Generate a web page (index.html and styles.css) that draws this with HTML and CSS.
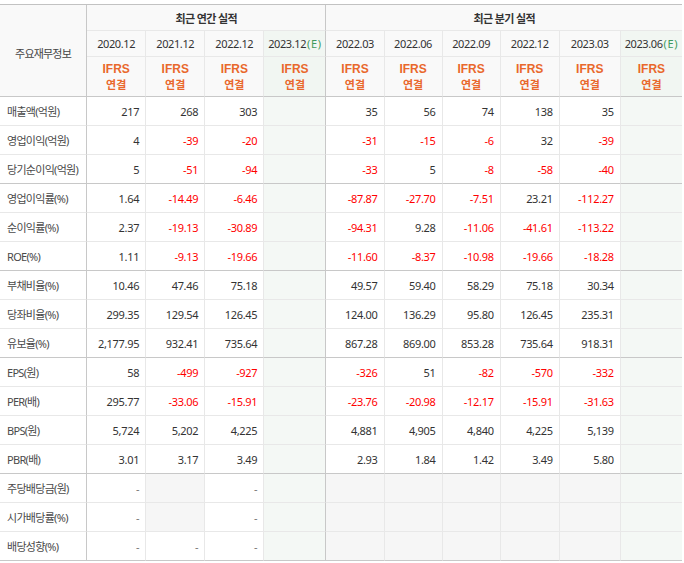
FILE: index.html
```html
<!DOCTYPE html>
<html lang="ko">
<head>
<meta charset="utf-8">
<title>주요재무정보</title>
<link rel="stylesheet" href="styles.css">
</head>
<body>
<table class="fin">
  <colgroup>
    <col class="c-label">
    <col class="c59"><col class="c59"><col class="c59"><col class="c62">
    <col class="c58"><col class="c58"><col class="c58"><col class="c59"><col class="c61"><col class="c62l">
  </colgroup>
  <thead>
    <tr class="h1">
      <th rowspan="3" class="lbl-head sep">주요재무정보</th>
      <th colspan="4" class="grp sep">최근 연간 실적</th>
      <th colspan="6" class="grp last">최근 분기 실적</th>
    </tr>
    <tr class="h2">
      <th>2020.12</th><th>2021.12</th><th>2022.12</th><th class="est sep">2023.12<span class="e">(E)</span></th>
      <th>2022.03</th><th>2022.06</th><th>2022.09</th><th>2022.12</th><th>2023.03</th><th class="est last">2023.06<span class="e">(E)</span></th>
    </tr>
    <tr class="h3">
      <th class="ifrs"><span class="ln l1">IFRS</span><span class="ln l2">연결</span></th>
      <th class="ifrs"><span class="ln l1">IFRS</span><span class="ln l2">연결</span></th>
      <th class="ifrs"><span class="ln l1">IFRS</span><span class="ln l2">연결</span></th>
      <th class="ifrs est sep"><span class="ln l1">IFRS</span><span class="ln l2">연결</span></th>
      <th class="ifrs"><span class="ln l1">IFRS</span><span class="ln l2">연결</span></th>
      <th class="ifrs"><span class="ln l1">IFRS</span><span class="ln l2">연결</span></th>
      <th class="ifrs"><span class="ln l1">IFRS</span><span class="ln l2">연결</span></th>
      <th class="ifrs"><span class="ln l1">IFRS</span><span class="ln l2">연결</span></th>
      <th class="ifrs"><span class="ln l1">IFRS</span><span class="ln l2">연결</span></th>
      <th class="ifrs est last"><span class="ln l1">IFRS</span><span class="ln l2">연결</span></th>
    </tr>
  </thead>
  <tbody>
    <tr>
      <th class="lbl sep">매출액(억원)</th>
      <td>217</td><td>268</td><td>303</td><td class="est sep"></td>
      <td>35</td><td>56</td><td>74</td><td>138</td><td>35</td><td class="est last"></td>
    </tr>
    <tr>
      <th class="lbl sep">영업이익(억원)</th>
      <td>4</td><td class="neg">-39</td><td class="neg">-20</td><td class="est sep"></td>
      <td class="neg">-31</td><td class="neg">-15</td><td class="neg">-6</td><td>32</td><td class="neg">-39</td><td class="est last"></td>
    </tr>
    <tr class="end">
      <th class="lbl sep">당기순이익(억원)</th>
      <td>5</td><td class="neg">-51</td><td class="neg">-94</td><td class="est sep"></td>
      <td class="neg">-33</td><td>5</td><td class="neg">-8</td><td class="neg">-58</td><td class="neg">-40</td><td class="est last"></td>
    </tr>
    <tr>
      <th class="lbl sep">영업이익률(%)</th>
      <td>1.64</td><td class="neg">-14.49</td><td class="neg">-6.46</td><td class="est sep"></td>
      <td class="neg">-87.87</td><td class="neg">-27.70</td><td class="neg">-7.51</td><td>23.21</td><td class="neg">-112.27</td><td class="est last"></td>
    </tr>
    <tr>
      <th class="lbl sep">순이익률(%)</th>
      <td>2.37</td><td class="neg">-19.13</td><td class="neg">-30.89</td><td class="est sep"></td>
      <td class="neg">-94.31</td><td>9.28</td><td class="neg">-11.06</td><td class="neg">-41.61</td><td class="neg">-113.22</td><td class="est last"></td>
    </tr>
    <tr class="end">
      <th class="lbl sep">ROE(%)</th>
      <td>1.11</td><td class="neg">-9.13</td><td class="neg">-19.66</td><td class="est sep"></td>
      <td class="neg">-11.60</td><td class="neg">-8.37</td><td class="neg">-10.98</td><td class="neg">-19.66</td><td class="neg">-18.28</td><td class="est last"></td>
    </tr>
    <tr>
      <th class="lbl sep">부채비율(%)</th>
      <td>10.46</td><td>47.46</td><td>75.18</td><td class="est sep"></td>
      <td>49.57</td><td>59.40</td><td>58.29</td><td>75.18</td><td>30.34</td><td class="est last"></td>
    </tr>
    <tr>
      <th class="lbl sep">당좌비율(%)</th>
      <td>299.35</td><td>129.54</td><td>126.45</td><td class="est sep"></td>
      <td>124.00</td><td>136.29</td><td>95.80</td><td>126.45</td><td>235.31</td><td class="est last"></td>
    </tr>
    <tr class="end">
      <th class="lbl sep">유보율(%)</th>
      <td>2,177.95</td><td>932.41</td><td>735.64</td><td class="est sep"></td>
      <td>867.28</td><td>869.00</td><td>853.28</td><td>735.64</td><td>918.31</td><td class="est last"></td>
    </tr>
    <tr>
      <th class="lbl sep">EPS(원)</th>
      <td>58</td><td class="neg">-499</td><td class="neg">-927</td><td class="est sep"></td>
      <td class="neg">-326</td><td>51</td><td class="neg">-82</td><td class="neg">-570</td><td class="neg">-332</td><td class="est last"></td>
    </tr>
    <tr>
      <th class="lbl sep">PER(배)</th>
      <td>295.77</td><td class="neg">-33.06</td><td class="neg">-15.91</td><td class="est sep"></td>
      <td class="neg">-23.76</td><td class="neg">-20.98</td><td class="neg">-12.17</td><td class="neg">-15.91</td><td class="neg">-31.63</td><td class="est last"></td>
    </tr>
    <tr>
      <th class="lbl sep">BPS(원)</th>
      <td>5,724</td><td>5,202</td><td>4,225</td><td class="est sep"></td>
      <td>4,881</td><td>4,905</td><td>4,840</td><td>4,225</td><td>5,139</td><td class="est last"></td>
    </tr>
    <tr class="end">
      <th class="lbl sep">PBR(배)</th>
      <td>3.01</td><td>3.17</td><td>3.49</td><td class="est sep"></td>
      <td>2.93</td><td>1.84</td><td>1.42</td><td>3.49</td><td>5.80</td><td class="est last"></td>
    </tr>
    <tr>
      <th class="lbl sep">주당배당금(원)</th>
      <td class="dash">-</td><td class="na"></td><td class="dash">-</td><td class="est sep"></td>
      <td class="na"></td><td class="na"></td><td class="na"></td><td class="na"></td><td class="na"></td><td class="est last"></td>
    </tr>
    <tr>
      <th class="lbl sep">시가배당률(%)</th>
      <td class="dash">-</td><td class="na"></td><td class="dash">-</td><td class="est sep"></td>
      <td class="na"></td><td class="na"></td><td class="na"></td><td class="na"></td><td class="na"></td><td class="est last"></td>
    </tr>
    <tr class="end">
      <th class="lbl sep">배당성향(%)</th>
      <td class="dash">-</td><td class="dash">-</td><td class="dash">-</td><td class="est sep"></td>
      <td class="na"></td><td class="na"></td><td class="na"></td><td class="na"></td><td class="na"></td><td class="est last"></td>
    </tr>
  </tbody>
</table>
</body>
</html>
```
FILE: styles.css
```css
html, body {
  margin: 0;
  padding: 0;
  background: #ffffff;
}

body {
  font-family: "Noto Sans", "Noto Sans CJK KR", sans-serif;
  color: #333333;
}

.fin {
  border-collapse: separate;
  border-spacing: 0;
  table-layout: fixed;
  width: 682px;
  margin-top: 4px;
  border-top: 1px solid #c2c2c2;
}

.c-label { width: 87px; }
.c59 { width: 59px; }
.c62 { width: 62px; }
.c58 { width: 58px; }
.c61 { width: 61px; }
.c62l { width: 61px; }

.fin th,
.fin td {
  box-sizing: border-box;
  padding: 0;
  border-right: 1px solid #e8e8e8;
  border-bottom: 1px solid #e8e8e8;
  font-size: 11px;
  font-weight: normal;
  vertical-align: middle;
}

.fin .sep {
  border-right-color: #c8c8c8;
}

.fin .last {
  border-right: none;
}

/* header */
.fin thead th {
  background: #f9f9f9;
  text-align: center;
  color: #333333;
}

.h1 th {
  height: 26px;
}

.h2 th {
  height: 26px;
  letter-spacing: -0.4px;
  color: #3a3a3a;
}

.h3 th {
  height: 40px;
  border-bottom-color: #c8c8c8;
}

.fin thead .lbl-head {
  border-bottom-color: #c8c8c8;
  color: #444444;
  letter-spacing: -0.8px;
  padding-top: 4px;
}

.fin thead .grp {
  font-weight: bold;
  letter-spacing: -0.6px;
  color: #333333;
}

.fin thead .est {
  background: #f1f6f2;
}

.e {
  color: #3e9a5e;
  letter-spacing: 0.6px;
  margin-left: 1px;
}

.fin thead .ifrs {
  color: #e9682c;
  font-weight: bold;
}

.ln {
  display: block;
}

.l1 {
  font-family: "Liberation Sans", "Noto Sans", sans-serif;
  font-size: 12px;
  line-height: 14px;
  height: 14px;
}

.l2 {
  font-family: "Noto Sans CJK KR", sans-serif;
  font-size: 11px;
  line-height: 16px;
  height: 16px;
}

/* body */
.fin tbody tr th,
.fin tbody tr td {
  height: 29px;
}

.fin .lbl {
  text-align: left;
  padding-left: 7px;
  color: #4a4a4a;
  letter-spacing: -0.7px;
  white-space: nowrap;
  background: #ffffff;
}

.fin tbody td {
  text-align: right;
  padding-right: 6px;
  letter-spacing: -0.3px;
  color: #333333;
  background: #ffffff;
}

.fin tbody td.neg {
  color: #ff0000;
}

.fin tbody td.est {
  background: #f4f8f5;
}

.fin tbody td.na {
  background: #f6f6f6;
}

.fin tbody td.dash {
  color: #777777;
}

.fin tbody tr.end th,
.fin tbody tr.end td {
  border-bottom-color: #c8c8c8;
}
```
